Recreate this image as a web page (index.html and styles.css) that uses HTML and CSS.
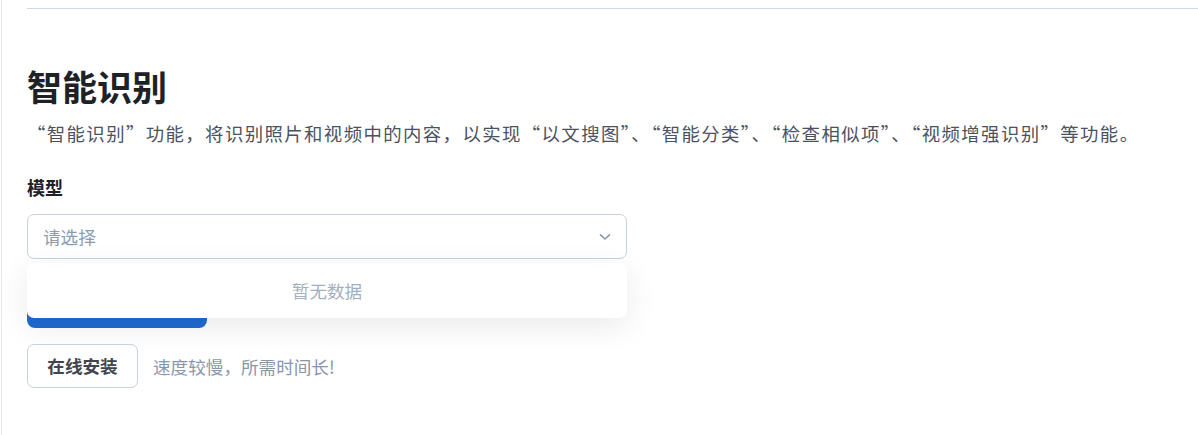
FILE: index.html
```html
<!DOCTYPE html>
<html lang="zh-CN">

<head>
    <meta charset="UTF-8">
    <meta name="viewport" content="width=device-width, initial-scale=1.0">
    <title>智能识别</title>
    <link rel="stylesheet" href="styles.css">
</head>

<body>
    <div class="main">
        <div class="topbar"></div>

        <div class="section">
            <h1 class="title">智能识别</h1>
            <p class="desc">“智能识别”功能，将识别照片和视频中的内容，以实现“以文搜图”、“智能分类”、“检查相似项”、“视频增强识别”等功能。</p>

            <div class="label">模型</div>

            <div class="select">
                <div class="select_box">
                    <span class="placeholder">请选择</span>
                    <svg class="arrow" width="12" height="8" viewBox="0 0 12 8">
                        <path d="M1.5 1.8 L6 6 L10.5 1.8" fill="none" stroke="#8a97aa" stroke-width="1.6" stroke-linecap="round" stroke-linejoin="round" />
                    </svg>
                </div>
                <div class="dropdown">暂无数据</div>
            </div>

            <div class="btn_primary">确定</div>

            <div class="install">
                <div class="btn_line">在线安装</div>
                <span class="tip">速度较慢，所需时间长!</span>
            </div>
        </div>
    </div>
</body>

</html>
```

FILE: styles.css
```css
* {
    margin: 0;
    padding: 0;
    box-sizing: border-box;
}

body {
    font-family: "Noto Sans CJK SC", "Noto Sans", sans-serif;
    font-size: 17.6px;
    color: #1f2328;
    background-color: #fff;
}

.main {
    height: 435px;
    margin-left: 1px;
    padding-left: 25px;
    border-left: 1px solid #e6e6e6;
    overflow: hidden;
}

.topbar {
    height: 9px;
    border-bottom: 1px solid #cfd9e4;
}

.title {
    margin-top: 55px;
    font-size: 35px;
    line-height: 44px;
    font-weight: 700;
    color: #1e2126;
}

.desc {
    margin-top: 12px;
    font-size: 18.4px;
    line-height: 26px;
    letter-spacing: 1.4px;
    color: #4a5261;
}

.label {
    margin-top: 28px;
    font-size: 18px;
    line-height: 26px;
    font-weight: 700;
    color: #1e2126;
}

.select {
    position: relative;
    width: 600px;
    margin-top: 14px;
}

.select_box {
    display: flex;
    align-items: center;
    justify-content: space-between;
    height: 45px;
    padding: 0 15px;
    border: 1px solid #c8d2de;
    border-radius: 7px;
    background-color: #fff;
}

.placeholder {
    color: #8b9bb2;
}

.dropdown {
    position: absolute;
    top: 49px;
    left: 0;
    z-index: 2;
    width: 600px;
    height: 55px;
    line-height: 55px;
    text-align: center;
    color: #a3afc0;
    background-color: #fff;
    border-radius: 7px;
    box-shadow: 0 8px 32px rgba(0, 0, 0, 0.09);
}

.btn_primary {
    width: 180px;
    height: 44px;
    margin-top: 25px;
    border-radius: 8px;
    background-color: #1f6bd1;
    color: #fff;
}

.install {
    display: flex;
    align-items: center;
    margin-top: 16px;
}

.btn_line {
    width: 111px;
    height: 44px;
    line-height: 42px;
    text-align: center;
    font-weight: 700;
    color: #3f4550;
    border: 1px solid #c8d2de;
    border-radius: 7px;
}

.tip {
    margin-left: 15px;
    color: #8796ab;
}
```
